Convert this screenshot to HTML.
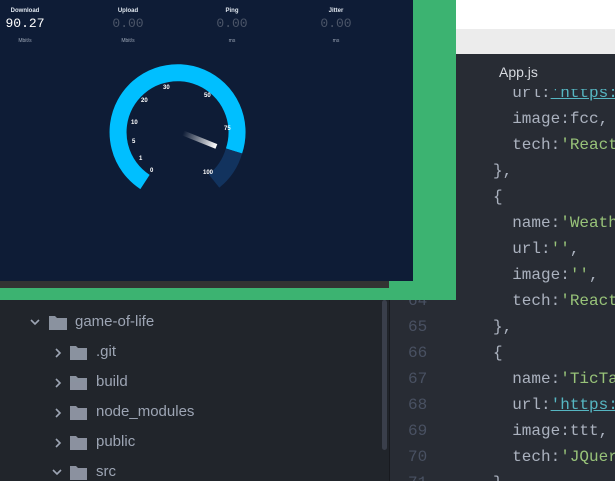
<!DOCTYPE html>
<html><head><style>
body{margin:0;width:615px;height:481px;overflow:hidden;background:#21252b;position:relative;font-family:"Liberation Sans",sans-serif}
.a{position:absolute}
.code{font-family:"Liberation Mono",monospace;font-size:16px;color:#abb2bf;white-space:pre}
.g{color:#98c379}.u{color:#56b6c2;text-decoration:underline}
.ln{font-family:"Liberation Mono",monospace;font-size:16px;color:#495162}
.hd{font-size:6px;font-weight:bold;color:#dfe6ee;text-align:center;width:60px}
.v{font-family:"Liberation Mono",monospace;font-size:13px;color:#4b5568;text-align:center;width:60px}
.un{font-size:5px;color:#9aa4b4;text-align:center;width:60px}
.t{font-size:15px;color:#9da5b4}
</style></head><body>
<div class="a" style="left:456px;top:0;width:159px;height:29px;background:#fff"></div>
<div class="a" style="left:456px;top:29px;width:159px;height:25px;background:#ececec"></div>
<div class="a" style="left:390px;top:54px;width:225px;height:427px;background:#282c34;overflow:hidden">
<div class="a code" style="left:103px;top:26px;line-height:26px">  url:<span class="u">'https:</span>
  image:fcc,
  tech:<span class="g">'React</span>
},
{
  name:<span class="g">'Weath</span>
  url:<span class="g">''</span>,
  image:<span class="g">''</span>,
  tech:<span class="g">'React</span>
},
{
  name:<span class="g">'TicTa</span>
  url:<span class="u">'https:</span>
  image:ttt,
  tech:<span class="g">'JQuer</span>
}</div>
<div class="a ln" style="left:18px;top:234px;line-height:26px;white-space:pre">64
65
66
67
68
69
70
71</div>
<div class="a" style="left:0;top:0;width:225px;height:35px;background:#282c34"></div>
<div class="a" style="left:109px;top:10px;font-size:14px;color:#d7dae0">App.js</div>
</div>
<div class="a" style="left:389px;top:54px;width:1px;height:427px;background:#181a1f"></div>
<div class="a" style="left:382px;top:300px;width:5px;height:150px;background:#3a3f4b;border-radius:3px"></div>
<svg class="a" style="left:0;top:300px" width="380" height="181">
<g fill="none" stroke="#9da5b4" stroke-width="1.6">
<path d="M31 20l4 4 4-4"/>
<path d="M56 49l4 4-4 4M56 79l4 4-4 4M56 109l4 4-4 4M56 139l4 4-4 4"/>
<path d="M53 170l4 4 4-4"/>
</g>
<g fill="#9da5b4" opacity=".85">
<path d="M49 16h6l2 2h10v12h-18z"/>
<path d="M70 46h6l2 2h9v12h-17zM70 76h6l2 2h9v12h-17zM70 106h6l2 2h9v12h-17zM70 136h6l2 2h9v12h-17zM70 166h6l2 2h9v12h-17z"/>
</g></svg>
<div class="a t" style="left:75px;top:313px">game-of-life</div>
<div class="a t" style="left:96px;top:343px">.git</div>
<div class="a t" style="left:96px;top:373px">build</div>
<div class="a t" style="left:96px;top:403px">node_modules</div>
<div class="a t" style="left:96px;top:433px">public</div>
<div class="a t" style="left:96px;top:463px">src</div>
<div class="a" style="left:0;top:0;width:456px;height:300px;background:#3cb371"></div>
<div class="a" style="left:0;top:0;width:413px;height:281px;background:#0e1c36"></div>
<div class="a" style="left:0;top:281px;width:389px;height:7px;background:#333"></div>
<div class="a hd" style="left:-5px;top:8px">Download</div>
<div class="a v" style="left:-5px;top:16px;color:#fff">90.27</div>
<div class="a un" style="left:-5px;top:38px">Mbit/s</div>
<div class="a hd" style="left:98px;top:8px">Upload</div>
<div class="a v" style="left:98px;top:16px">0.00</div>
<div class="a un" style="left:98px;top:38px">Mbit/s</div>
<div class="a hd" style="left:202px;top:8px">Ping</div>
<div class="a v" style="left:202px;top:16px">0.00</div>
<div class="a un" style="left:202px;top:38px">ms</div>
<div class="a hd" style="left:306px;top:8px">Jitter</div>
<div class="a v" style="left:306px;top:16px">0.00</div>
<div class="a un" style="left:306px;top:38px">ms</div>
<svg class="a" style="left:0;top:0" width="413" height="281">
<defs><linearGradient id="n" x1="0" x2="1"><stop offset="0" stop-color="#fff" stop-opacity="0"/><stop offset="1" stop-color="#fff"/></linearGradient></defs>
<path d="M145 182A59.5 59.5 0 1 1 234 151" fill="none" stroke="#00bfff" stroke-width="17"/>
<path d="M234 151A59.5 59.5 0 0 1 214 181" fill="none" stroke="#12335e" stroke-width="17"/>
<g transform="translate(183,133) rotate(22)"><rect x="0" y="-2.5" width="36" height="5" fill="url(#n)"/></g>
<g font-size="6" fill="#fff" font-family="Liberation Sans" font-weight="bold">
<text x="150" y="172">0</text><text x="139" y="160">1</text><text x="132" y="143">5</text><text x="131" y="124">10</text><text x="141" y="102">20</text><text x="163" y="89">30</text><text x="204" y="97">50</text><text x="224" y="130">75</text><text x="203" y="174">100</text>
</g></svg>
</body></html>
